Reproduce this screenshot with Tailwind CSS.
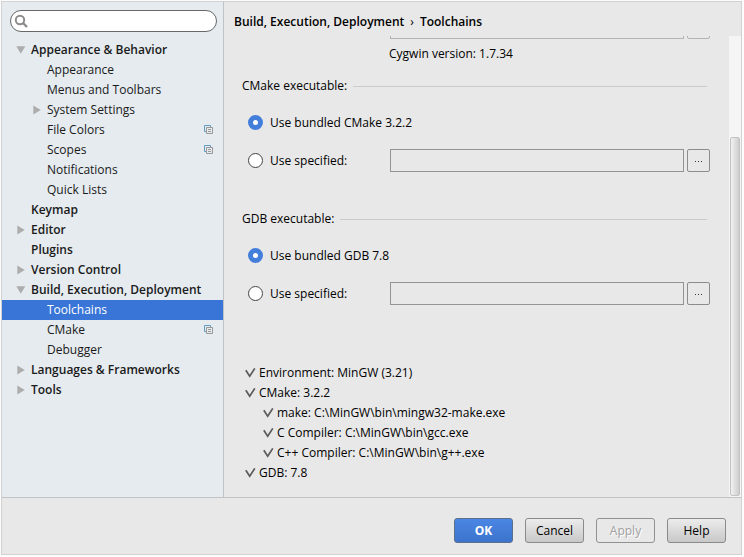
<!DOCTYPE html>
<html lang="en">
<head>
    <meta charset="UTF-8">
    <meta name="viewport" content="width=device-width, initial-scale=1.0">
    <title>Settings - Toolchains</title>
    <script src="https://cdn.jsdelivr.net/npm/@tailwindcss/browser@4"></script>
</head>
<body class="h-screen bg-[#fcfcfc] pt-px pl-px pr-0.5 pb-0.5 font-['Open_Sans','Noto_Sans',sans-serif] text-[12px] leading-5 text-black">
    <!-- Shared icons -->
    <svg class="hidden">
        <symbol id="down" viewBox="0 0 10 8"><path d="M0.3 0.3h9L4.8 7.8z" fill="#adadad"/></symbol>
        <symbol id="right" viewBox="0 0 8 10"><path d="M0.3 0.4v9L7.8 4.9z" fill="#adadad"/></symbol>
        <symbol id="copy" viewBox="0 0 10 10">
            <path d="M2 6.5H0.5V0.5H6.5V2" fill="none" stroke="#5f9cbf"/>
            <path d="M2.5 2.5h6v6h-6zM4 4.5h3M4 6.5h3" fill="none" stroke="#999"/>
        </symbol>
        <symbol id="check" viewBox="0 0 11 11"><path d="M0.8 2.2L4.7 8.2L9.8 0.4" fill="none" stroke="#5a5a5a" stroke-width="1.7"/></symbol>
    </svg>

    <div class="flex h-full flex-col border border-[#d2d2d2] bg-[#e8e8e8]">
        <div class="flex min-h-0 flex-1">
            <!-- Sidebar -->
            <aside class="w-[222px] shrink-0 border-r border-[#c0c3c5] bg-[#e5ebef] pt-2">
                <div class="relative mx-2 mr-1.5">
                    <svg class="absolute top-1 left-1 size-[14px]" viewBox="0 0 14 14" fill="none" stroke="#8c8c8c">
                        <circle cx="6" cy="6" r="4.2" stroke-width="2"/>
                        <path d="M9 9l4 4" stroke-width="2.4"/>
                    </svg>
                    <input type="text" aria-label="Search settings" class="block h-[22px] w-full rounded-full border border-[#66686a] bg-white pr-3 pl-6 outline-none">
                </div>

                <nav class="mt-2 text-[#1a1a1a]">
                    <ul>
                        <li><a href="#" class="flex h-5 items-center pl-[14px] font-semibold"><svg class="mr-[5px] h-2 w-2.5"><use href="#down"/></svg>Appearance &amp; Behavior</a></li>
                        <li><a href="#" class="flex h-5 items-center pl-[45px]">Appearance</a></li>
                        <li><a href="#" class="flex h-5 items-center pl-[45px]">Menus and Toolbars</a></li>
                        <li><a href="#" class="flex h-5 items-center pl-[31px]"><svg class="mr-1.5 h-2.5 w-2"><use href="#right"/></svg>System Settings</a></li>
                        <li><a href="#" class="flex h-5 items-center pr-[9px] pl-[45px]">File Colors<svg class="ml-auto size-2.5"><use href="#copy"/></svg></a></li>
                        <li><a href="#" class="flex h-5 items-center pr-[9px] pl-[45px]">Scopes<svg class="ml-auto size-2.5"><use href="#copy"/></svg></a></li>
                        <li><a href="#" class="flex h-5 items-center pl-[45px]">Notifications</a></li>
                        <li><a href="#" class="flex h-5 items-center pl-[45px]">Quick Lists</a></li>
                        <li><a href="#" class="flex h-5 items-center pl-[29px] font-semibold">Keymap</a></li>
                        <li><a href="#" class="flex h-5 items-center pl-[15px] font-semibold"><svg class="mr-1.5 h-2.5 w-2"><use href="#right"/></svg>Editor</a></li>
                        <li><a href="#" class="flex h-5 items-center pl-[29px] font-semibold">Plugins</a></li>
                        <li><a href="#" class="flex h-5 items-center pl-[15px] font-semibold"><svg class="mr-1.5 h-2.5 w-2"><use href="#right"/></svg>Version Control</a></li>
                        <li><a href="#" class="flex h-5 items-center pl-[14px] font-semibold"><svg class="mr-[5px] h-2 w-2.5"><use href="#down"/></svg>Build, Execution, Deployment</a></li>
                        <li><a href="#" class="flex h-5 items-center bg-[#3875d6] pl-[45px] text-white">Toolchains</a></li>
                        <li><a href="#" class="flex h-5 items-center pr-[9px] pl-[45px]">CMake<svg class="ml-auto size-2.5"><use href="#copy"/></svg></a></li>
                        <li><a href="#" class="flex h-5 items-center pl-[45px]">Debugger</a></li>
                        <li><a href="#" class="flex h-5 items-center pl-[15px] font-semibold"><svg class="mr-1.5 h-2.5 w-2"><use href="#right"/></svg>Languages &amp; Frameworks</a></li>
                        <li><a href="#" class="flex h-5 items-center pl-[15px] font-semibold"><svg class="mr-1.5 h-2.5 w-2"><use href="#right"/></svg>Tools</a></li>
                    </ul>
                </nav>
            </aside>

            <!-- Settings page -->
            <main class="flex min-w-0 flex-1 flex-col">
                <h1 class="flex h-[34px] shrink-0 items-center gap-1.5 pt-1.5 pl-2.5 font-semibold">
                    <span>Build, Execution, Deployment</span><span class="font-normal">›</span><span>Toolchains</span>
                </h1>

                <div class="flex min-h-0 flex-1">
                    <div class="min-w-0 flex-1 overflow-hidden pr-[19px] pl-[18px]">
                        <!-- Cygwin path, scrolled out of view -->
                        <div class="flex h-[3px] items-end gap-[3px] overflow-hidden pl-[148px]">
                            <input type="text" aria-label="Cygwin home" class="h-[23px] min-w-0 flex-1 border border-[#b4b4b4]">
                            <button type="button" aria-label="Browse Cygwin home" class="size-[23px] rounded-[2px] border border-[#b4b4b4]"></button>
                        </div>
                        <p class="flex h-[30px] items-center pl-[147px]">Cygwin version: 1.7.34</p>

                        <section class="mt-[7px] flex flex-col gap-[15px]">
                            <h2 class="flex h-5 items-center gap-1.5">CMake executable:<span class="mr-[3px] h-px flex-1 bg-[#cbcbcb]"></span></h2>
                            <label class="flex h-[23px] items-center gap-[7px] pl-1.5">
                                <input type="radio" name="cmake" checked class="size-[15px] appearance-none rounded-full border border-[#444] bg-white checked:border-5 checked:border-[#437edb]">
                                Use bundled CMake 3.2.2
                            </label>
                            <div class="flex h-[23px] items-center gap-[3px]">
                                <label class="flex w-[145px] shrink-0 items-center gap-[7px] pl-1.5">
                                    <input type="radio" name="cmake" class="size-[15px] appearance-none rounded-full border border-[#444] bg-white checked:border-5 checked:border-[#437edb]">
                                    Use specified:
                                </label>
                                <input type="text" aria-label="CMake path" disabled class="h-[23px] min-w-0 flex-1 border border-[#939393] px-1">
                                <button type="button" aria-label="Browse CMake path" class="flex size-[23px] items-center justify-center rounded-[2px] border border-[#8c8c8c]">
                                    <svg class="h-[3px] w-[9px]" viewBox="0 0 9 3"><path d="M1 2h1v1H1zM4 2h1v1H4zM7 2h1v1H7z" fill="#333"/></svg>
                                </button>
                            </div>
                        </section>

                        <section class="mt-[37px] flex flex-col gap-[15px]">
                            <h2 class="flex h-5 items-center gap-1.5">GDB executable:<span class="mr-[3px] h-px flex-1 bg-[#cbcbcb]"></span></h2>
                            <label class="flex h-[23px] items-center gap-[7px] pl-1.5">
                                <input type="radio" name="gdb" checked class="size-[15px] appearance-none rounded-full border border-[#444] bg-white checked:border-5 checked:border-[#437edb]">
                                Use bundled GDB 7.8
                            </label>
                            <div class="flex h-[23px] items-center gap-[3px]">
                                <label class="flex w-[145px] shrink-0 items-center gap-[7px] pl-1.5">
                                    <input type="radio" name="gdb" class="size-[15px] appearance-none rounded-full border border-[#444] bg-white checked:border-5 checked:border-[#437edb]">
                                    Use specified:
                                </label>
                                <input type="text" aria-label="GDB path" disabled class="h-[23px] min-w-0 flex-1 border border-[#939393] px-1">
                                <button type="button" aria-label="Browse GDB path" class="flex size-[23px] items-center justify-center rounded-[2px] border border-[#8c8c8c]">
                                    <svg class="h-[3px] w-[9px]" viewBox="0 0 9 3"><path d="M1 2h1v1H1zM4 2h1v1H4zM7 2h1v1H7z" fill="#333"/></svg>
                                </button>
                            </div>
                        </section>

                        <!-- Toolchain check results -->
                        <ul class="mt-[58px] pl-[3px]">
                            <li class="flex h-5 items-center gap-[3px]"><svg class="size-[11px]"><use href="#check"/></svg>Environment: MinGW (3.21)</li>
                            <li class="flex h-5 items-center gap-[3px]"><svg class="size-[11px]"><use href="#check"/></svg>CMake: 3.2.2</li>
                            <li class="flex h-5 items-center gap-[3px] pl-[18px]"><svg class="size-[11px]"><use href="#check"/></svg>make: C:\MinGW\bin\mingw32-make.exe</li>
                            <li class="flex h-5 items-center gap-[3px] pl-[18px]"><svg class="size-[11px]"><use href="#check"/></svg>C Compiler: C:\MinGW\bin\gcc.exe</li>
                            <li class="flex h-5 items-center gap-[3px] pl-[18px]"><svg class="size-[11px]"><use href="#check"/></svg>C++ Compiler: C:\MinGW\bin\g++.exe</li>
                            <li class="flex h-5 items-center gap-[3px]"><svg class="size-[11px]"><use href="#check"/></svg>GDB: 7.8</li>
                        </ul>
                    </div>

                    <!-- Scrollbar -->
                    <div class="flex w-3 shrink-0 flex-col justify-end bg-[#f5f5f5] px-px pb-px">
                        <div class="h-[78%] rounded-[2px] border border-[#c3c3c3] bg-linear-to-r from-[#f2f2f2] to-[#cdcdcd]"></div>
                    </div>
                </div>
            </main>
        </div>

        <!-- Dialog buttons -->
        <footer class="flex h-[57px] shrink-0 items-start justify-end gap-3 border-t border-[#c3c3c3] pt-5 pr-[15px]">
            <button type="button" class="h-[25px] w-[59px] rounded-[3px] border border-[#5c6f8c] bg-linear-to-b from-[#4a86e4] to-[#3c74cc] font-bold text-white">OK</button>
            <button type="button" class="h-[25px] w-[59px] rounded-[3px] border border-[#8a8a8a] bg-linear-to-b from-[#ececec] to-[#c8c8c8]">Cancel</button>
            <button type="button" disabled class="h-[25px] w-[59px] rounded-[3px] border border-[#919191] text-[#a0a0a0] text-shadow-[1px_1px_0_#fff]">Apply</button>
            <button type="button" class="h-[25px] w-[59px] rounded-[3px] border border-[#8a8a8a] bg-linear-to-b from-[#ececec] to-[#c8c8c8]">Help</button>
        </footer>
    </div>
</body>
</html>
